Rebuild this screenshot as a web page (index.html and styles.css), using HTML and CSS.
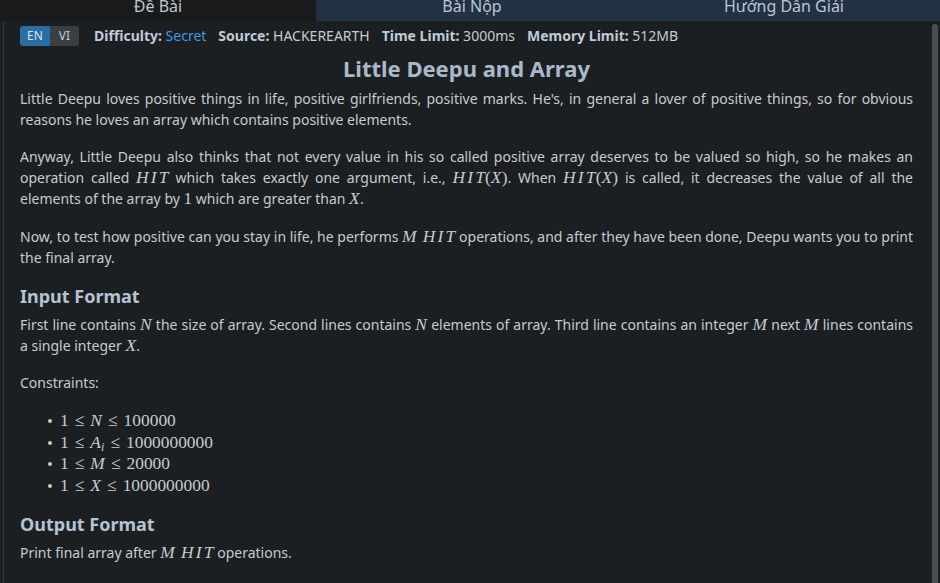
FILE: index.html
```html
<!DOCTYPE html>
<html lang="vi">
<head>
<meta charset="utf-8">
<title>Little Deepu and Array</title>
<link rel="stylesheet" href="styles.css">
</head>
<body>
<nav class="tabs">
  <div class="tab tab-active">Đề Bài</div>
  <div class="tab">Bài Nộp</div>
  <div class="tab">Hướng Dẫn Giải</div>
</nav>
<div class="frame">
  <main class="panel">
    <div class="meta">
      <div class="lang">
        <span class="lang-btn lang-on">EN</span><span class="lang-btn">VI</span>
      </div>
      <span class="meta-item"><b>Difficulty:</b> <span class="secret">Secret</span></span>
      <span class="meta-item"><b>Source:</b> HACKEREARTH</span>
      <span class="meta-item"><b>Time Limit:</b> 3000ms</span>
      <span class="meta-item"><b>Memory Limit:</b> 512MB</span>
    </div>
    <h1 class="title">Little Deepu and Array</h1>
    <p>Little Deepu loves positive things in life, positive girlfriends, positive marks. He's, in general a lover of positive things, so for obvious reasons he loves an array which contains positive elements.</p>
    <p class="p-math">Anyway, Little Deepu also thinks that not every value in his so called positive array deserves to be valued so high, so he makes an operation called <span class="m"><i>HIT</i></span> which takes exactly one argument, i.e., <span class="m"><i>HIT</i><span class="mn">(</span><i>X</i><span class="mn">)</span></span>. When <span class="m"><i>HIT</i><span class="mn">(</span><i>X</i><span class="mn">)</span></span> is called, it decreases the value of all the elements of the array by <span class="m"><span class="mn">1</span></span> which are greater than <span class="m"><i>X</i></span>.</p>
    <p>Now, to test how positive can you stay in life, he performs <span class="m"><i>M</i><span class="sp"></span><i>HIT</i></span> operations, and after they have been done, Deepu wants you to print the final array.</p>
    <h2 class="sub">Input Format</h2>
    <p>First line contains <span class="m"><i>N</i></span> the size of array. Second lines contains <span class="m"><i>N</i></span> elements of array. Third line contains an integer <span class="m"><i>M</i></span> next <span class="m"><i>M</i></span> lines contains a single integer <span class="m"><i>X</i></span>.</p>
    <p class="cons-label">Constraints:</p>
    <ul class="cons">
      <li><span class="m"><span class="mn">1</span><span class="rel">≤</span><i>N</i><span class="rel">≤</span><span class="mn">100000</span></span></li>
      <li><span class="m"><span class="mn">1</span><span class="rel">≤</span><i>A</i><sub class="sb"><i>i</i></sub><span class="rel">≤</span><span class="mn">1000000000</span></span></li>
      <li><span class="m"><span class="mn">1</span><span class="rel">≤</span><i>M</i><span class="rel">≤</span><span class="mn">20000</span></span></li>
      <li><span class="m"><span class="mn">1</span><span class="rel">≤</span><i>X</i><span class="rel">≤</span><span class="mn">1000000000</span></span></li>
    </ul>
    <h2 class="sub">Output Format</h2>
    <p>Print final array after <span class="m"><i>M</i><span class="sp"></span><i>HIT</i></span> operations.</p>
  </main>
  <div class="scroll"><div class="thumb"></div></div>
</div>
</body>
</html>
```
FILE: styles.css
```css
html, body {
  margin: 0;
  padding: 0;
  height: 100%;
  overflow: hidden;
  background: #1c1f21;
  color: #c4cbd2;
  font-family: "Noto Sans", "Open Sans", sans-serif;
  font-size: 14px;
}

.tabs {
  display: grid;
  grid-template-columns: 316px 312px 1fr;
  height: 21px;
  overflow: hidden;
  background: #223244;
}

.tab {
  text-align: center;
  font-size: 16px;
  line-height: 12px;
  color: #bcc6d0;
  background: #223244;
}

.tab-active {
  background: #181a1b;
}

.frame {
  display: flex;
  height: calc(100% - 21px);
}

.panel {
  flex: 1;
  margin-left: 3px;
  border-left: 1px solid #33373a;
  padding: 5px 17px 0 16px;
}

.scroll {
  width: 10px;
  display: flex;
  justify-content: flex-start;
  padding-left: 2px;
  box-sizing: border-box;
}

.thumb {
  width: 6px;
  margin-top: 3px;
  height: 100%;
  background: #4a4e52;
  border-radius: 3px 3px 0 0;
}

.meta {
  display: flex;
  align-items: center;
  gap: 12px;
  height: 20px;
  line-height: 20px;
  white-space: nowrap;
}

.meta b {
  color: #bfcbd7;
  font-weight: 700;
}

.lang {
  display: flex;
  margin-right: 3px;
  border-radius: 3px;
  overflow: hidden;
}

.lang-btn {
  display: block;
  width: 29px;
  height: 20px;
  text-align: center;
  font-size: 12px;
  line-height: 20px;
  background: #3a3f43;
  color: #c5ccd3;
}

.lang-on {
  width: 30px;
  background: #2a6ea6;
  color: #d9e5ef;
}

.secret {
  color: #3d9be0;
}

.title {
  margin: 7px 0 5px;
  font-size: 22px;
  line-height: 30px;
  text-align: center;
  font-weight: 700;
  color: #a9b9c9;
}

p {
  margin: 0 0 16px;
  line-height: 21px;
  text-align: justify;
}

.p-math {
  padding-bottom: 1px;
}

.sub {
  margin: 1px 0 5px;
  font-size: 18px;
  line-height: 25px;
  font-weight: 700;
  color: #b5c3d1;
}

.m {
  font-family: "Liberation Serif", "Times New Roman", serif;
  font-size: 17.4px;
  line-height: 1;
  white-space: nowrap;
}

.m i {
  font-style: italic;
  letter-spacing: 2.2px;
  margin-right: -2px;
}

.mn {
  font-style: normal;
  letter-spacing: 0;
}

.sp {
  display: inline-block;
  width: 6px;
}

.rel {
  margin: 0 6px;
}

.sb {
  font-size: 12px;
  vertical-align: -3px;
  line-height: 1;
}

.sb i {
  margin-right: -2.2px;
}

.cons-label {
  margin-bottom: 17px;
}

.cons {
  margin: 0 0 15px;
  padding-left: 40px;
  list-style: none;
}

.cons li {
  line-height: 21.7px;
}

.cons li::before {
  content: "";
  display: inline-block;
  width: 4px;
  height: 4px;
  border-radius: 50%;
  background: #c4cbd2;
  margin-left: -12px;
  margin-right: 8px;
  vertical-align: 3px;
}
```
